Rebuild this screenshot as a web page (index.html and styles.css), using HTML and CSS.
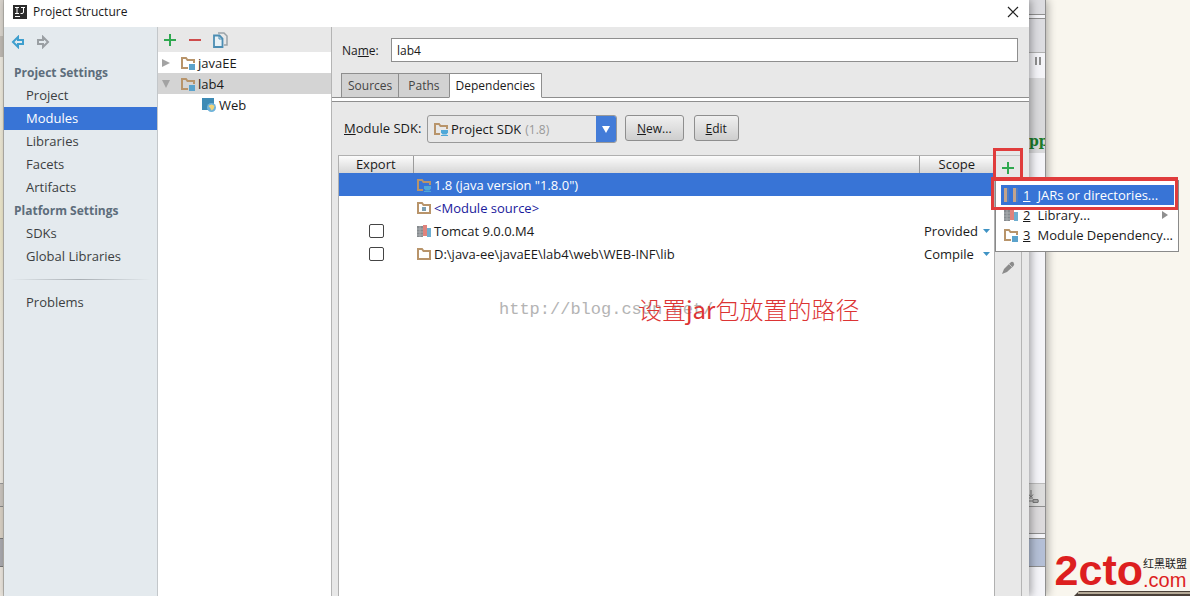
FILE: index.html
```html
<!DOCTYPE html>
<html lang="en">
<head>
    <meta charset="UTF-8">
    <meta name="viewport" content="width=device-width, initial-scale=1.0">
    <title>Project Structure</title>
    <link rel="stylesheet" href="styles.css">
</head>
<body>

    <!-- shared icons -->
    <svg class="defs" width="0" height="0">
        <symbol id="folder" viewBox="0 0 16 16">
            <path d="M2 13V3h4l1.500 2H14v8z" fill="none" stroke="#b8946a" stroke-width="2"/>
        </symbol>
        <symbol id="module" viewBox="0 0 16 16">
            <path d="M8 13H2V3h4l1.500 2H14v3" fill="none" stroke="#b8946a" stroke-width="2"/>
            <rect x="9" y="9" width="6" height="6" fill="#5ba3cc"/>
        </symbol>
        <symbol id="sdk" viewBox="0 0 16 16">
            <path d="M7 13H2V3h4l1.500 2H14v3" fill="none" stroke="#b8946a" stroke-width="2"/>
            <path d="M8 9h7v2.500l-1.500 2h-4L8 11.500z" fill="#4fa8d8"/>
            <path d="M8 14.500h7" stroke="#4fa8d8"/>
        </symbol>
        <symbol id="source" viewBox="0 0 16 16">
            <path d="M2 13V3h4l1.500 2H14v8z" fill="none" stroke="#b8946a" stroke-width="2"/>
            <rect x="6" y="7" width="4" height="4" fill="#7d9fb0"/>
        </symbol>
        <symbol id="library" viewBox="0 0 16 16">
            <path d="M1 3h6v11H1z" fill="#858a8e"/>
            <path d="M1 6h6M1 9h6M1 12h6M4 3v11" stroke="#a9adb0" stroke-width="1"/>
            <path d="M7 2h4v11H7z" fill="#e0837c"/>
            <path d="M11 5h4v9h-4z" fill="#6faed0"/>
        </symbol>
        <symbol id="plus" viewBox="0 0 14 14">
            <path d="M7 1v12M1 7h12" stroke="#2fa84f" stroke-width="2"/>
        </symbol>
    </svg>

    <div class="edge">
        <div class="edge-top"></div>
        <div class="edge-mark"></div>
        <div class="edge-fill"></div>
        <div class="edge-bar"></div>
        <div class="edge-status"></div>
        <div class="edge-task"></div>
        <div class="edge-end"></div>
    </div>

    <div class="dialog">
        <div class="titlebar">
            <svg width="14" height="14" viewBox="0 0 14 14">
                <rect width="14" height="14" fill="#2b2b2b"/>
                <path d="M2 2.500h4M4 2.500v6M2 8.500h4M8 2.500h4M10.500 2.500v4.500q0 1.500-1.500 1.500h-1.500M2 11.500h5" fill="none" stroke="#fff" stroke-width="1"/>
            </svg>
            <span class="title">Project Structure</span>
            <button class="close" aria-label="Close">
                <svg width="12" height="12" viewBox="0 0 12 12"><path d="M1 1l10 10M11 1L1 11" stroke="#222" stroke-width="1.200"/></svg>
            </button>
        </div>

        <div class="content">
            <div class="sidebar">
                <div class="history">
                    <button aria-label="Back"><svg width="14" height="14" viewBox="0 0 14 14"><path d="M2 7l5-5v3h5v4H7v3z" fill="none" stroke="#3f9fce" stroke-width="2"/></svg></button>
                    <button aria-label="Forward"><svg width="14" height="14" viewBox="0 0 14 14"><path d="M12 7L7 2v3H2v4h5v3z" fill="none" stroke="#9a9fa3" stroke-width="2"/></svg></button>
                </div>
                <h3>Project Settings</h3>
                <a href="#">Project</a>
                <a href="#" class="active">Modules</a>
                <a href="#">Libraries</a>
                <a href="#">Facets</a>
                <a href="#">Artifacts</a>
                <h3>Platform Settings</h3>
                <a href="#">SDKs</a>
                <a href="#">Global Libraries</a>
                <hr>
                <a href="#">Problems</a>
            </div>

            <div class="tree">
                <div class="tree-tools">
                    <button aria-label="Add"><svg width="14" height="14"><use href="#plus"/></svg></button>
                    <button aria-label="Remove"><svg width="14" height="14" viewBox="0 0 14 14"><path d="M1 7h12" stroke="#cf4b4b" stroke-width="2"/></svg></button>
                    <button aria-label="Copy">
                        <svg width="16" height="16" viewBox="0 0 16 16">
                            <path d="M5 1h6l3 3v9h-3" fill="none" stroke="#9aa3a8" stroke-width="1.500"/>
                            <path d="M1 3.500h5.500l3 3V15H1z" fill="#e8f1f6" stroke="#4b8db3" stroke-width="1.800"/>
                            <path d="M6 3.500V7h3.500" fill="none" stroke="#4b8db3"/>
                        </svg>
                    </button>
                </div>
                <div class="node">
                    <svg width="8" height="8" viewBox="0 0 8 8"><path d="M0 0l8 4-8 4z" fill="#a3a3a3"/></svg>
                    <svg class="node-icon" width="16" height="16"><use href="#module"/></svg>
                    <span>javaEE</span>
                </div>
                <div class="node selected">
                    <svg width="8" height="8" viewBox="0 0 8 8"><path d="M0 0h8L4 8z" fill="#a3a3a3"/></svg>
                    <svg class="node-icon" width="16" height="16"><use href="#module"/></svg>
                    <span>lab4</span>
                </div>
                <div class="node child">
                    <svg width="16" height="16" viewBox="0 0 16 16">
                        <rect x="1" y="1" width="12" height="12" fill="#3e8bb5"/>
                        <circle cx="10.500" cy="10.500" r="4.500" fill="#6fb3da"/>
                        <path d="M7.500 9q3-3 6 0l-1 3-2 1.500-1-2z" fill="#f2d478"/>
                    </svg>
                    <span>Web</span>
                </div>
            </div>

            <div class="main">
                <div class="name-row">
                    <label for="module-name">Na<u>m</u>e:</label>
                    <input type="text" id="module-name" value="lab4">
                </div>

                <div class="tabs">
                    <button>Sources</button>
                    <button>Paths</button>
                    <button class="current">Dependencies</button>
                </div>

                <div class="sdk-row">
                    <label for="module-sdk"><u>M</u>odule SDK:</label>
                    <div class="combo">
                        <svg width="16" height="16"><use href="#sdk"/></svg>
                        <select id="module-sdk">
                            <option>Project SDK</option>
                        </select>
                        <span class="version">(1.8)</span>
                        <span class="combo-arrow"><svg width="8" height="7" viewBox="0 0 8 7"><path d="M0 0h8L4 7z" fill="#fff"/></svg></span>
                    </div>
                    <button class="btn btn-new"><u>N</u>ew...</button>
                    <button class="btn"><u>E</u>dit</button>
                </div>

                <div class="deps">
                    <div class="deps-list">
                        <table>
                            <thead>
                                <tr>
                                    <th class="col-export">Export</th>
                                    <th></th>
                                    <th class="col-scope">Scope</th>
                                </tr>
                            </thead>
                            <tbody>
                                <tr class="selected">
                                    <td></td>
                                    <td><div class="dep"><svg width="16" height="16"><use href="#sdk"/></svg>1.8 (java version "1.8.0")</div></td>
                                    <td></td>
                                </tr>
                                <tr>
                                    <td></td>
                                    <td><div class="dep module-source"><svg width="16" height="16"><use href="#source"/></svg>&lt;Module source&gt;</div></td>
                                    <td></td>
                                </tr>
                                <tr>
                                    <td class="export"><input type="checkbox" aria-label="Export Tomcat 9.0.0.M4"></td>
                                    <td><div class="dep"><svg width="16" height="16"><use href="#library"/></svg>Tomcat 9.0.0.M4</div></td>
                                    <td>
                                        <div class="scope">
                                            <select aria-label="Tomcat scope"><option>Provided</option></select>
                                            <svg width="7" height="4" viewBox="0 0 7 4"><path d="M0 0h7L3.500 4z" fill="#3f93c4"/></svg>
                                        </div>
                                    </td>
                                </tr>
                                <tr>
                                    <td class="export"><input type="checkbox" aria-label="Export lib folder"></td>
                                    <td><div class="dep"><svg width="16" height="16"><use href="#folder"/></svg>D:\java-ee\javaEE\lab4\web\WEB-INF\lib</div></td>
                                    <td>
                                        <div class="scope">
                                            <select aria-label="lib scope"><option>Compile</option></select>
                                            <svg width="7" height="4" viewBox="0 0 7 4"><path d="M0 0h7L3.500 4z" fill="#3f93c4"/></svg>
                                        </div>
                                    </td>
                                </tr>
                            </tbody>
                        </table>
                        <span class="watermark">http://blog.csdn.net/</span>
                        <span class="note" lang="zh">设置<b>jar</b>包放置的路径</span>
                    </div>

                    <div class="deps-tools">
                        <button class="add" aria-label="Add dependency"><svg width="14" height="14"><use href="#plus"/></svg></button>
                        <button class="edit" aria-label="Edit dependency">
                            <svg width="14" height="14" viewBox="0 0 14 14"><path d="M1 13l2-5 6-6q2-2 3.500-.5t0 3.500L6 11z" fill="#8b8b8b"/><path d="M8 3l3 3" stroke="#c5c5c5"/></svg>
                        </button>
                        <div class="mark mark-add"></div>
                        <div class="menu">
                            <button class="menu-item active">
                                <svg width="16" height="16" viewBox="0 0 16 16"><path d="M2.500 1v14M11.500 1v14" stroke="#c4a48c" stroke-width="3"/><path d="M5 1v14M14 1v14" stroke="#6b86b0" stroke-width="1"/></svg>
                                <u>1</u><span>JARs or directories...</span>
                            </button>
                            <button class="menu-item">
                                <svg width="16" height="16"><use href="#library"/></svg>
                                <u>2</u><span>Library...</span>
                                <svg class="sub" width="6" height="8" viewBox="0 0 6 8"><path d="M0 0l6 4-6 4z" fill="#8f8f8f"/></svg>
                            </button>
                            <button class="menu-item">
                                <svg width="16" height="16"><use href="#module"/></svg>
                                <u>3</u><span>Module Dependency...</span>
                            </button>
                        </div>
                        <div class="mark mark-jars"></div>
                    </div>
                </div>
            </div>
        </div>
    </div>

    <div class="ide">
        <div class="ide-top"></div>
        <div class="ide-tools"></div>
        <div class="ide-pause"><svg width="8" height="8" viewBox="0 0 8 8"><path d="M2 0v8M6 0v8" stroke="#8d8d8d" stroke-width="2"/></svg></div>
        <div class="ide-tab">pp</div>
        <div class="ide-editor"></div>
        <div class="ide-download"><svg width="10" height="13" viewBox="0 0 10 13"><path d="M2 0v7M0 4.500L2 7l2-2.500M0 8h4M0 11h10M4 9.500h5v3H4z" fill="none" stroke="#777"/></svg></div>
        <div class="ide-status"></div>
        <div class="ide-task"></div>
        <div class="ide-end"></div>
    </div>

    <div class="desktop">
        <div class="logo">
            <span class="logo-main">2cto</span>
            <span class="logo-side">
                <span class="logo-name" lang="zh">红黑联盟</span>
                <span class="logo-com">.com</span>
            </span>
        </div>
        <svg class="ledge" width="116" height="5" viewBox="0 0 116 5" preserveAspectRatio="none"><path d="M0 5l5-5h111v5z" fill="#4a4039"/><path d="M4 2h112" stroke="#b5aa98" stroke-width="2"/></svg>
    </div>

</body>
</html>
```
FILE: styles.css
```css
* {
    box-sizing: border-box;
}
body {
    margin: 0;
    height: 100vh;
    display: flex;
    overflow: hidden;
    background-color: #f9f6ee;
    font-family: "Open Sans", "Noto Sans CJK SC", sans-serif;
    font-size: 13px;
    color: #1a1a1a;
}
button, input, select {
    font: inherit;
    color: inherit;
}
button {
    padding: 0;
    border: none;
    background: none;
}
svg {
    display: block;
    flex: none;
}
.defs {
    position: absolute;
}

/* window behind, left edge */
.edge {
    width: 4px;
    display: flex;
    flex-direction: column;
    background-color: #e9e4dc;
    border-right: 1px solid #b9b6b0;
}
.edge-top {
    height: 36px;
    background-color: #d8d3cc;
}
.edge-mark {
    height: 21px;
    background-color: #bdb8b2;
}
.edge-fill {
    flex: 1;
    background: linear-gradient(#ece8df, #ebe5c8 40%, #ece8e0 70%);
}
.edge-bar {
    height: 24px;
    background-color: #c9c4bd;
    border-top: 1px solid #999;
    border-bottom: 1px solid #888;
}
.edge-status {
    height: 31px;
    background-color: #d8d0c4;
}
.edge-task {
    height: 29px;
    background-color: #a9a9ae;
    border-top: 1px solid #777;
    border-bottom: 1px solid #777;
}
.edge-end {
    height: 29px;
}

/* dialog */
.dialog {
    flex: 1;
    display: flex;
    flex-direction: column;
    background-color: #e8e8e8;
    position: relative;
    z-index: 2;
    box-shadow: 2px 0 8px rgba(0, 0, 0, 0.35);
}
.titlebar {
    height: 27px;
    padding: 0 10px 4px 9px;
    display: flex;
    align-items: center;
    background-color: #fff;
}
.title {
    margin-left: 6px;
    font-size: 12px;
}
.close {
    margin-left: auto;
}
.content {
    flex: 1;
    display: flex;
}

.sidebar {
    width: 154px;
    background-color: #e4eaee;
    border-right: 1px solid #c3c7ca;
}
.history {
    height: 34px;
    padding: 8px 7px 0;
    display: flex;
    gap: 11px;
    align-items: flex-start;
}
.sidebar h3 {
    margin: 0;
    padding-left: 10px;
    font-size: 12px;
    line-height: 23px;
    font-weight: bold;
    color: #5d6d7b;
}
.sidebar a {
    display: block;
    padding-left: 22px;
    line-height: 23px;
    color: #3c3f42;
    text-decoration: none;
}
.sidebar a.active {
    background-color: #3874d6;
    color: #fff;
}
.sidebar hr {
    height: 1px;
    margin: 11px 6px;
    border: none;
    background: linear-gradient(to right, #e4eaee, #a9afb4, #e4eaee);
}

.tree {
    width: 174px;
    background-color: #fff;
    border-right: 1px solid #b4b4b4;
}
.tree-tools {
    height: 25px;
    padding: 0 5px;
    display: flex;
    align-items: center;
    gap: 11px;
    background-color: #e8e8e8;
}
.node {
    height: 21px;
    padding-left: 4px;
    display: flex;
    align-items: center;
}
.node-icon {
    margin: 0 2px 0 10px;
}
.node.selected {
    background-color: #d4d4d4;
}
.node.child {
    padding-left: 43px;
    gap: 2px;
}

.main {
    flex: 1;
    display: flex;
    flex-direction: column;
}
.name-row {
    display: flex;
    align-items: center;
    gap: 10px;
    padding: 11px 11px 0 10px;
    font-size: 12px;
}
.name-row label {
    width: 39px;
}
.name-row input {
    flex: 1;
    height: 24px;
    padding: 0 5px;
    border: 1px solid #8e8e8e;
    background-color: #fff;
}
.tabs {
    display: flex;
    height: 29px;
    margin-top: 11px;
    padding-left: 9px;
    font-size: 12px;
    background: linear-gradient(#8e8e8e, #8e8e8e) 0 24px / 100% 1px no-repeat,
        linear-gradient(#fff, #fff) 0 25px / 100% 3px no-repeat;
    border-bottom: 1px solid #8e8e8e;
}
.tabs button {
    height: 25px;
    padding: 0 6px;
    border: 1px solid #8e8e8e;
    border-right: none;
    background-color: #d2d2d2;
    color: #444;
}
.tabs button:nth-child(2) {
    padding: 0 9px;
}
.tabs button.current {
    border-right: 1px solid #8e8e8e;
    border-bottom-color: #fff;
    background-color: #fff;
    color: #1a1a1a;
}
.sdk-row {
    display: flex;
    padding: 13px 12px 12px;
}
.sdk-row label {
    width: 83px;
    line-height: 27px;
}
.combo {
    width: 190px;
    height: 28px;
    padding-left: 5px;
    display: flex;
    align-items: center;
    border: 1px solid #999;
    border-radius: 3px;
    overflow: hidden;
}
.combo select {
    appearance: none;
    field-sizing: content;
    border: none;
    background: none;
    padding: 0;
    margin: 0 4px 0 2px;
}
.version {
    font-size: 12px;
    color: #999;
}
.combo-arrow {
    width: 20px;
    height: 28px;
    margin-left: auto;
    display: flex;
    align-items: center;
    justify-content: center;
    background-color: #437cd8;
}
.btn {
    height: 26px;
    margin-left: 10px;
    padding: 0 11px;
    border: 1px solid #8e8e8e;
    border-radius: 3px;
    background: linear-gradient(#f0f0f0, #cecece);
    font-size: 12px;
}
.btn-new {
    margin-left: 8px;
}

.deps {
    flex: 1;
    display: flex;
    margin: 0 7px 0 6px;
}
.deps-list {
    flex: 1;
    position: relative;
    background-color: #fff;
    border: 1px solid #b0b0b0;
    border-bottom: none;
}
table {
    width: 100%;
    border-collapse: collapse;
    table-layout: fixed;
}
th {
    height: 17px;
    padding: 0;
    font-weight: normal;
    line-height: 17px;
    background: linear-gradient(#fcfcfc, #d6d6d6);
    border-right: 1px solid #9b9b9b;
}
th:last-child {
    border-right: none;
}
.col-export {
    width: 74px;
}
.col-scope {
    width: 75px;
}
td {
    height: 23px;
    padding: 0;
}
tr.selected td {
    background-color: #3874d6;
    color: #fff;
}
.dep {
    display: flex;
    align-items: center;
    gap: 2px;
    padding-left: 3px;
}
.module-source {
    color: #1a1a9c;
}
.export {
    text-align: center;
}
.export input {
    appearance: none;
    display: block;
    width: 15px;
    height: 14px;
    margin: 0 auto;
    border: 1px solid #444;
    border-radius: 2px;
    background-color: #fff;
}
.scope {
    display: flex;
    align-items: center;
    justify-content: space-between;
    padding: 0 4px 0 5px;
}
.scope select {
    appearance: none;
    padding: 0;
    border: none;
    background: none;
}
.deps-tools {
    width: 27px;
    position: relative;
    border-top: 1px solid #c0c0c0;
    border-right: 1px solid #b4b4b4;
}
.deps-tools .add {
    display: block;
    margin: 5px 6px 0;
}
.deps-tools .edit {
    display: block;
    margin: 86px 6px 0;
}

/* popup menu over the toolbar */
.menu {
    position: absolute;
    top: 24px;
    left: 0;
    width: 184px;
    padding: 4px 4px 6px 5px;
    border: 1px solid #8a8a8a;
    background-color: #fff;
}
.menu-item {
    width: 100%;
    height: 20px;
    padding-left: 2px;
    display: flex;
    align-items: center;
    gap: 4px;
    white-space: nowrap;
}
.menu-item u {
    margin-right: 3px;
}
.menu-item.active {
    background-color: #3874d6;
    color: #fff;
}
.menu-item .sub {
    margin: 0 6px 0 auto;
}
.mark {
    position: absolute;
    border: 3px solid #e03c3c;
}
.mark-add {
    top: -8px;
    left: -2px;
    width: 30px;
    height: 32px;
}
.mark-jars {
    top: 21px;
    left: -4px;
    width: 187px;
    height: 33px;
    border-width: 4px 3px 3px;
}
.watermark {
    position: absolute;
    top: 144px;
    left: 160px;
    font-family: "Liberation Mono", monospace;
    font-size: 17px;
    color: #b4b4b4;
}
.note {
    position: absolute;
    top: 135px;
    left: 299px;
    font-family: "Noto Sans CJK SC", sans-serif;
    font-size: 24px;
    font-weight: 300;
    color: #dc3434;
}
.note b {
    font-weight: 400;
}

/* window behind, right edge */
.ide {
    width: 17px;
    display: flex;
    flex-direction: column;
    background-color: #f4f4f8;
    border-right: 1px solid #8f8f8f;
    box-shadow: 2px 0 8px rgba(0, 0, 0, 0.3);
}
.ide-top {
    height: 15px;
    background-color: #dcdce0;
    border-bottom: 1px solid #8f8f8f;
}
.ide-tools {
    height: 35px;
    margin-top: 3px;
    background-color: #dcdce0;
    border-top: 1px solid #8f8f8f;
    border-bottom: 1px solid #b0b0b0;
}
.ide-pause {
    height: 25px;
    padding: 4px 0 0 5px;
}
.ide-tab {
    height: 75px;
    display: flex;
    align-items: flex-end;
    overflow: hidden;
    background-color: #d9d9db;
    font-family: "DejaVu Serif", serif;
    font-size: 14px;
    line-height: 24px;
    font-weight: bold;
    color: #1c7a2c;
}
.ide-editor {
    flex: 1;
}
.ide-download {
    height: 24px;
    padding-top: 6px;
    background-color: #dcdcdc;
    border-top: 1px solid #bbb;
    border-bottom: 1px solid #8f8f8f;
}
.ide-status {
    height: 27px;
    margin-bottom: 4px;
    background-color: #dcdadc;
    border-bottom: 1px solid #8f8f8f;
}
.ide-task {
    height: 29px;
    background-color: #b4bfd6;
    border-top: 1px solid #8f8f8f;
    border-bottom: 1px solid #8f8f8f;
}
.ide-end {
    height: 29px;
}

.desktop {
    width: 144px;
    display: flex;
    flex-direction: column;
    justify-content: flex-end;
    align-items: flex-end;
}
.logo {
    display: flex;
    align-items: flex-end;
    padding-right: 3px;
    color: #dd1f1f;
}
.logo-main {
    font-family: "Liberation Sans", sans-serif;
    font-size: 43px;
    line-height: 42px;
    font-weight: bold;
}
.logo-side {
    display: flex;
    flex-direction: column;
}
.logo-name {
    font-family: "Noto Sans CJK SC", sans-serif;
    font-size: 11px;
    line-height: 12px;
    color: #222;
}
.logo-com {
    font-family: "Liberation Sans", sans-serif;
    font-size: 20px;
    line-height: 22px;
}
```
